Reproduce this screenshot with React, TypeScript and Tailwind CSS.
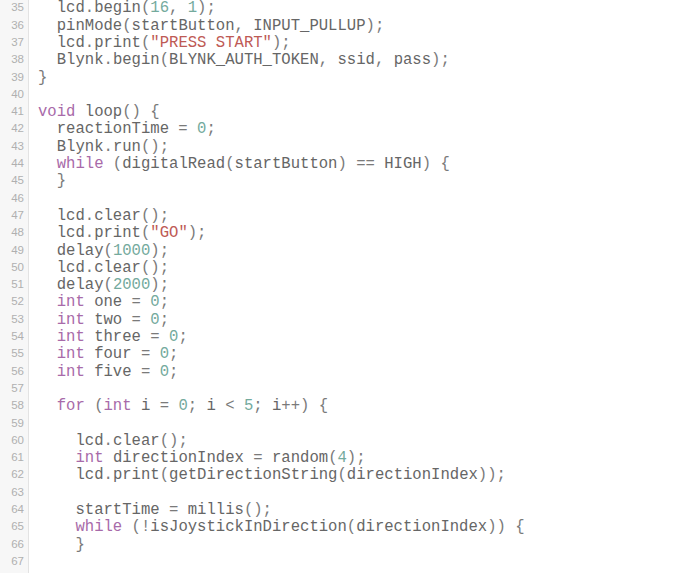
import { ReactNode } from 'react';

const startLine = 35;

const code = [
  '  lcd.begin(16, 1);',
  '  pinMode(startButton, INPUT_PULLUP);',
  '  lcd.print("PRESS START");',
  '  Blynk.begin(BLYNK_AUTH_TOKEN, ssid, pass);',
  '}',
  '',
  'void loop() {',
  '  reactionTime = 0;',
  '  Blynk.run();',
  '  while (digitalRead(startButton) == HIGH) {',
  '  }',
  '',
  '  lcd.clear();',
  '  lcd.print("GO");',
  '  delay(1000);',
  '  lcd.clear();',
  '  delay(2000);',
  '  int one = 0;',
  '  int two = 0;',
  '  int three = 0;',
  '  int four = 0;',
  '  int five = 0;',
  '',
  '  for (int i = 0; i < 5; i++) {',
  '',
  '    lcd.clear();',
  '    int directionIndex = random(4);',
  '    lcd.print(getDirectionString(directionIndex));',
  '',
  '    startTime = millis();',
  '    while (!isJoystickInDirection(directionIndex)) {',
  '    }',
  '',
];

const keywords = ['void', 'int', 'while', 'for'];

// tiny tokenizer: strings, numbers, keywords, everything else plain
function highlight(line: string): ReactNode[] {
  const parts: ReactNode[] = [];
  const re = /("[^"]*")|(\b\d+\b)|([A-Za-z_]\w*)|([^"A-Za-z_\d]+)/g;
  let m: RegExpExecArray | null;
  let k = 0;
  while ((m = re.exec(line)) !== null) {
    if (m[1]) {
      parts.push(<span key={k++} className="text-[#be5a55]">{m[1]}</span>);
    } else if (m[2]) {
      parts.push(<span key={k++} className="text-[#74aa9d]">{m[2]}</span>);
    } else if (m[3]) {
      if (keywords.includes(m[3])) {
        parts.push(<span key={k++} className="text-[#a86aa9]">{m[3]}</span>);
      } else {
        parts.push(<span key={k++}>{m[3]}</span>);
      }
    } else {
      parts.push(<span key={k++} className="text-[#7a7a7a]">{m[4]}</span>);
    }
  }
  return parts;
}

export default function App() {
  return (
    <div className="h-[573px] w-[684px] overflow-hidden bg-white flex">
      <div className="w-[29px] shrink-0 bg-[#f7f7f7] border-r border-[#e3e3e3]">
        <div className="mt-[-0.6px]">
          {code.map((_, i) => (
            <div
              key={i}
              className="h-[17.31px] leading-[17.31px] pr-[4px] text-right text-[11.5px] text-[#b0b0b0]"
              style={{ fontFamily: '"Liberation Sans", Arial, sans-serif' }}
            >
              {startLine + i}
            </div>
          ))}
        </div>
      </div>
      <div
        className="flex-1 pl-[9px] text-[15.6px] text-[#666666]"
        style={{ fontFamily: '"Liberation Mono", "Courier New", monospace' }}
      >
        <div className="mt-[0.4px]">
          {code.map((line, i) => (
            <div key={i} className="h-[17.31px] leading-[17.31px] whitespace-pre">
              {highlight(line)}
            </div>
          ))}
        </div>
      </div>
    </div>
  );
}
